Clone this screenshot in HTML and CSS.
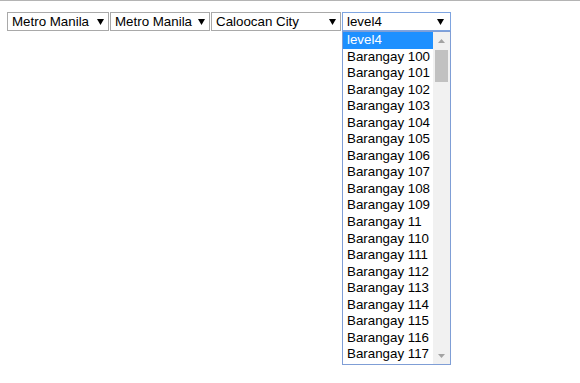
FILE: index.html
```html
<!DOCTYPE html>
<html lang="en">
<head>
    <meta charset="UTF-8">
    <meta name="viewport" content="width=device-width, initial-scale=1.0">
    <title>Location Picker</title>
    <link rel="stylesheet" href="styles.css">
</head>
<body>
    <div class="bar">
        <div class="picker picker-region">
            <span>Metro Manila</span>
            <svg class="arrow" width="7" height="6" viewBox="0 0 7 6"><polygon points="0,0 7,0 3.5,6" /></svg>
        </div>
        <div class="picker picker-province">
            <span>Metro Manila</span>
            <svg class="arrow" width="7" height="6" viewBox="0 0 7 6"><polygon points="0,0 7,0 3.5,6" /></svg>
        </div>
        <div class="picker picker-city">
            <span>Caloocan City</span>
            <svg class="arrow" width="7" height="6" viewBox="0 0 7 6"><polygon points="0,0 7,0 3.5,6" /></svg>
        </div>
        <div class="picker picker-barangay focused">
            <span>level4</span>
            <svg class="arrow" width="7" height="6" viewBox="0 0 7 6"><polygon points="0,0 7,0 3.5,6" /></svg>

            <!-- open option list -->
            <div class="dropdown">
                <ul class="options">
                    <li class="selected">level4</li>
                    <li>Barangay 100</li>
                    <li>Barangay 101</li>
                    <li>Barangay 102</li>
                    <li>Barangay 103</li>
                    <li>Barangay 104</li>
                    <li>Barangay 105</li>
                    <li>Barangay 106</li>
                    <li>Barangay 107</li>
                    <li>Barangay 108</li>
                    <li>Barangay 109</li>
                    <li>Barangay 11</li>
                    <li>Barangay 110</li>
                    <li>Barangay 111</li>
                    <li>Barangay 112</li>
                    <li>Barangay 113</li>
                    <li>Barangay 114</li>
                    <li>Barangay 115</li>
                    <li>Barangay 116</li>
                    <li>Barangay 117</li>
                </ul>
                <div class="scrollbar">
                    <div class="scroll-btn">
                        <svg width="7" height="4" viewBox="0 0 7 4"><polygon points="0,4 7,4 3.5,0" /></svg>
                    </div>
                    <div class="thumb"></div>
                    <div class="scroll-space"></div>
                    <div class="scroll-btn">
                        <svg width="7" height="4" viewBox="0 0 7 4"><polygon points="0,0 7,0 3.5,4" /></svg>
                    </div>
                </div>
            </div>
        </div>
    </div>
</body>
</html>
```

FILE: styles.css
```css
body {
    margin: 0;
    font-family: 'Liberation Sans', Arial, sans-serif;
    font-size: 13.33px;
    color: #000;
    background-color: #fff;
    border-top: 1px solid #b4b4b4;
    height: 382px;
}

.bar {
    display: flex;
    gap: 1px;
    padding: 11px 0 0 7px;
}

.picker {
    position: relative;
    display: flex;
    align-items: center;
    justify-content: space-between;
    box-sizing: border-box;
    height: 19px;
    padding: 0 4px 0 4px;
    border: 1px solid #a9a9a9;
    background-color: #fff;
    white-space: nowrap;
}

.picker-region {
    width: 102px;
}

.picker-province {
    width: 100px;
}

.picker-city {
    width: 130px;
}

.picker-barangay {
    width: 109px;
    padding-right: 6px;
}

.focused {
    border-color: #7ea4e0;
}

.arrow {
    fill: #000;
    flex-shrink: 0;
}

.dropdown {
    position: absolute;
    top: 18px;
    left: -1px;
    width: 109px;
    height: 334px;
    box-sizing: border-box;
    border: 1px solid #7f9ed6;
    background-color: #fff;
    display: flex;
    overflow: hidden;
}

.options {
    list-style: none;
    margin: 0;
    padding: 0;
    flex: 1;
}

.options li {
    height: 16.55px;
    line-height: 16.55px;
    padding-left: 4px;
    color: #000;
}

.options li.selected {
    background-color: #1e90ff;
    color: #fff;
}

.scrollbar {
    width: 17px;
    background-color: #f1f1f1;
    display: flex;
    flex-direction: column;
}

.scroll-btn {
    height: 17px;
    display: flex;
    align-items: center;
    justify-content: center;
    fill: #a3a3a3;
}

.thumb {
    height: 32px;
    margin: 1px 2px 0 2px;
    background-color: #c1c1c1;
}

.scroll-space {
    flex: 1;
}
```
